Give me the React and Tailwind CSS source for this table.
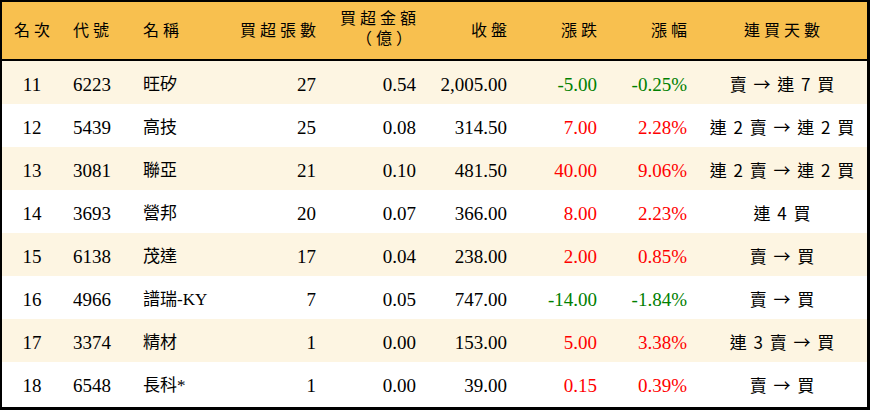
import React from 'react';

const rows = [
  { rank: 11, code: '6223', name: '旺矽', vol: '27', amt: '0.54', close: '2,005.00', chg: '-5.00', pct: '-0.25%', days: '賣 → 連 7 買' },
  { rank: 12, code: '5439', name: '高技', vol: '25', amt: '0.08', close: '314.50', chg: '7.00', pct: '2.28%', days: '連 2 賣 → 連 2 買' },
  { rank: 13, code: '3081', name: '聯亞', vol: '21', amt: '0.10', close: '481.50', chg: '40.00', pct: '9.06%', days: '連 2 賣 → 連 2 買' },
  { rank: 14, code: '3693', name: '營邦', vol: '20', amt: '0.07', close: '366.00', chg: '8.00', pct: '2.23%', days: '連 4 買' },
  { rank: 15, code: '6138', name: '茂達', vol: '17', amt: '0.04', close: '238.00', chg: '2.00', pct: '0.85%', days: '賣 → 買' },
  { rank: 16, code: '4966', name: '譜瑞-KY', vol: '7', amt: '0.05', close: '747.00', chg: '-14.00', pct: '-1.84%', days: '賣 → 買' },
  { rank: 17, code: '3374', name: '精材', vol: '1', amt: '0.00', close: '153.00', chg: '5.00', pct: '3.38%', days: '連 3 賣 → 買' },
  { rank: 18, code: '6548', name: '長科*', vol: '1', amt: '0.00', close: '39.00', chg: '0.15', pct: '0.39%', days: '賣 → 買' },
];

const cols = 'grid grid-cols-[60px_71px_93px_100px_100px_91px_90px_90px_170px]';

const App = () => {
  return (
    <div className="w-[870px] h-[410px] bg-white font-['Liberation_Serif','Noto_Sans_CJK_TC',serif] text-black">
      <div className="border-l-2 border-r-[3px] border-t-2 border-b-[3px] border-black h-full">
        {/* Header */}
        <div className={`${cols} h-[59px] bg-[#f8c04f] border-b-2 border-black text-[16px] items-center`}>
          <div className="text-center tracking-[4px] pl-[4px]">名次</div>
          <div className="pl-[11px] tracking-[4px]">代號</div>
          <div className="pl-[10px] tracking-[4px]">名稱</div>
          <div className="text-right pr-[6px] tracking-[4px]">買超張數</div>
          <div className="text-right pr-[6px] tracking-[4px] leading-[20px] -mt-[4px]">
            <div>買超金額</div>
            <div className="pr-[4px]">（億）</div>
          </div>
          <div className="text-right pr-[6px] tracking-[4px]">收盤</div>
          <div className="text-right pr-[6px] tracking-[4px]">漲跌</div>
          <div className="text-right pr-[6px] tracking-[4px]">漲幅</div>
          <div className="text-center tracking-[4px] pl-[4px]">連買天數</div>
        </div>

        {/* Rows */}
        {rows.map((r, i) => {
          const up = !r.chg.startsWith('-');
          const color = up ? 'text-[#ff0000]' : 'text-[#008000]';
          return (
            <div
              key={r.rank}
              className={`${cols} h-[43px] pt-[5px] items-center text-[19px] ${i % 2 === 0 ? 'bg-[#fdf5e2]' : 'bg-white'}`}
            >
              <div className="text-center">{r.rank}</div>
              <div className="pl-[11px]">{r.code}</div>
              <div className="pl-[10px] text-[17px]">{r.name}</div>
              <div className="text-right pr-[10px]">{r.vol}</div>
              <div className="text-right pr-[10px]">{r.amt}</div>
              <div className="text-right pr-[10px]">{r.close}</div>
              <div className={`text-right pr-[10px] ${color}`}>{r.chg}</div>
              <div className={`text-right pr-[10px] ${color}`}>{r.pct}</div>
              <div className="text-center text-[17px] whitespace-pre tracking-[1.5px] pl-[1.5px] font-['Noto_Sans_CJK_TC',sans-serif] -mt-[3px]">{r.days}</div>
            </div>
          );
        })}
      </div>
    </div>
  );
};

export default App;
